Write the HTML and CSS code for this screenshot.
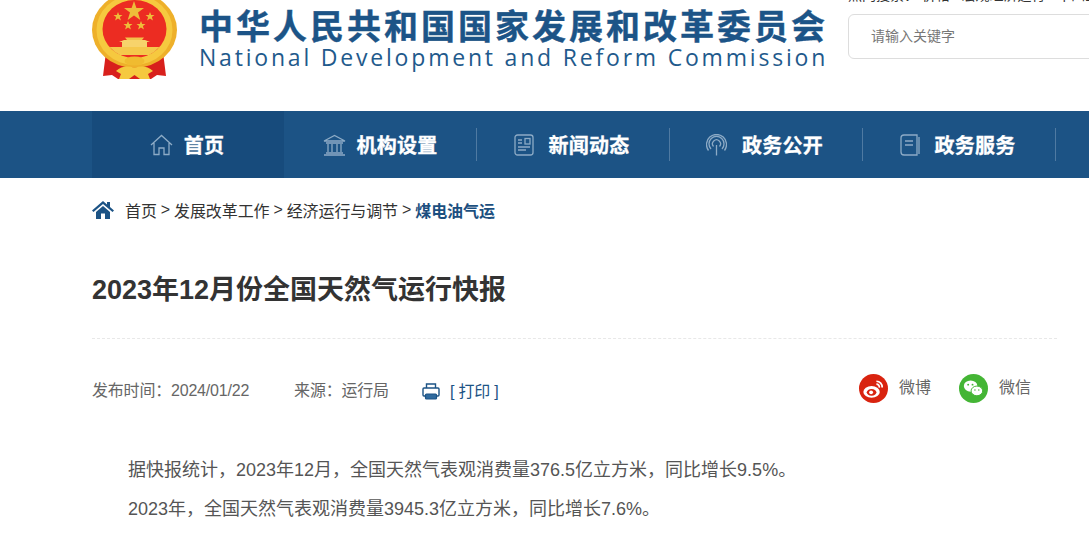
FILE: index.html
```html
<!DOCTYPE html>
<html lang="zh-CN">
<head>
<meta charset="utf-8">
<title>2023年12月份全国天然气运行快报</title>
<link rel="stylesheet" href="styles.css">
</head>
<body>
<header class="header">
  <svg class="emblem" width="85" height="80" viewBox="92 0 85 80" aria-hidden="true">
    <path d="M106 52 L103 76 L112 75 L118 79 H151 L157 75 L166 76 L163 52Z" fill="#d8201c"/>
    <ellipse cx="134.500" cy="30" rx="42.500" ry="38" fill="#eeb02a"/>
    <ellipse cx="134.500" cy="30" rx="38" ry="35" fill="#f6c93f"/>
    <ellipse cx="134.500" cy="29" rx="32" ry="29" fill="#ec2c22"/>
    <path d="M109.500 47 H159.500 Q155 52 149 55 H120 Q114 52 109.500 47Z" fill="#f5c84c"/>
    <path d="M122 47 V42 H119 L124 40 H145 L150 42 H147 V47Z" fill="#f7d36b"/>
    <path d="M127 40 L125 37.500 H144 L142 40Z" fill="#f2c24a"/>
    <g fill="#eebd3a">
      <path d="M134 1 L136.400 8 L144 8 L138 12.500 L140.300 20 L134 15.500 L127.700 20 L130 12.500 L124 8 L131.600 8Z"/>
      <path d="M118 12 L119.200 15 L122.500 15 L119.900 17 L120.900 20.500 L118 18.500 L115.100 20.500 L116.100 17 L113.500 15 L116.800 15Z"/>
      <path d="M150 12 L151.200 15 L154.500 15 L151.900 17 L152.900 20.500 L150 18.500 L147.100 20.500 L148.100 17 L145.500 15 L148.800 15Z"/>
      <path d="M128 21 L129.200 24 L132.500 24 L129.900 26 L130.900 29.500 L128 27.500 L125.100 29.500 L126.100 26 L123.500 24 L126.800 24Z"/>
      <path d="M141 21 L142.200 24 L145.500 24 L142.900 26 L143.900 29.500 L141 27.500 L138.100 29.500 L139.100 26 L136.500 24 L139.800 24Z"/>
    </g>
    <ellipse cx="134.500" cy="61" rx="10" ry="4.500" fill="#f0bb30"/>
    <path d="M116 71 Q124 64 134.500 68 Q145 64 153 71 L148 74 L150 79 H140 L134.500 75 L129 79 H119 L121 74Z" fill="#f5c93f"/>
  </svg>
  <div class="brand">
    <div class="brand-cn">中华人民共和国国家发展和改革委员会</div>
    <div class="brand-en">National Development and Reform Commission</div>
  </div>
  <div class="search-col">
    <div class="hot"><span class="hot-text">热门搜索： 价格 &nbsp; 宏观经济运行 &nbsp; 十四五规划 碳达峰</span></div>
    <div class="search-box">请输入关键字</div>
  </div>
</header>

<nav class="nav">
  <a class="nav-item active">
    <svg class="nav-icon" width="23" height="22" viewBox="0 0 23 22"><path d="M1 11 L11.500 1.500 L22 11 M4 9 V20.500 H9 V14 H14 V20.500 H19 V9"/></svg>
    <span>首页</span>
  </a>
  <a class="nav-item">
    <svg class="nav-icon" width="23" height="22" viewBox="0 0 23 22"><path d="M1 7 L11.500 1.500 L22 7 Z M3 9 H20 M5 10 V18 M9 10 V18 M14 10 V18 M18 10 V18 M3 19 H20 M1 21 H22"/></svg>
    <span>机构设置</span>
  </a>
  <a class="nav-item wide">
    <svg class="nav-icon" width="20" height="22" viewBox="0 0 20 22"><rect x="1" y="1" width="18" height="20" rx="2.500"/><path d="M4 6 H8 M4 9 H8 M4 13 H16 M4 16 H12"/><rect x="11" y="4.500" width="5" height="5.500"/></svg>
    <span>新闻动态</span>
  </a>
  <a class="nav-item wide">
    <svg class="nav-icon" width="21" height="22" viewBox="0 0 21 22"><path d="M10.500 11 V21.500"/><path d="M5 15 A7.500 7.500 0 1 1 16 15 M7.500 12.500 A4 4 0 1 1 13.500 12.500 M2.500 16.500 A10 10 0 1 1 18.500 16.500"/></svg>
    <span>政务公开</span>
  </a>
  <a class="nav-item wide">
    <svg class="nav-icon" width="20" height="22" viewBox="0 0 20 22"><path d="M17 1 H4 A3 3 0 0 0 1 4 V18 A3 3 0 0 0 4 21 H17 Z M19 3 V20"/><path d="M5 7 H13 M5 11 H13"/></svg>
    <span>政务服务</span>
  </a>
</nav>

<main class="main">
  <div class="crumbs">
    <svg class="crumb-home" width="22" height="18" viewBox="0 0 22 18"><path d="M11 0 L15 3.400 V1 H18 V6 L22 9.500 L20.500 11 L11 3 L1.500 11 L0 9.500Z M4 11 L11 5 L18 11 V18 H13 V12.500 H9 V18 H4Z"/></svg>
    <span>首页</span><span class="sep">&gt;</span><span>发展改革工作</span><span class="sep">&gt;</span><span>经济运行与调节</span><span class="sep">&gt;</span><strong>煤电油气运</strong>
  </div>
  <h1 class="title">2023年12月份全国天然气运行快报</h1>
  <div class="meta">
    <span>发布时间：2024/01/22</span>
    <span class="meta-src">来源：运行局</span>
    <a class="print">
      <svg class="print-icon" width="18" height="17" viewBox="0 0 18 17"><path class="print-line" d="M4.500 5 V1 H13.500 V5 M3.500 13 H2 A1 1 0 0 1 1 12 V6 A1 1 0 0 1 2 5 H16 A1 1 0 0 1 17 6 V12 A1 1 0 0 1 16 13 H14.500"/><rect class="print-fill" x="3.500" y="11" width="11" height="5" rx="1"/></svg>
      <span class="print-text">[ 打印 ]</span>
    </a>
    <div class="share">
      <a class="share-item">
        <svg width="29" height="29" viewBox="0 0 30 30"><circle cx="15" cy="15" r="15" fill="#d9230f"/><ellipse cx="13" cy="18.500" rx="8.500" ry="6" fill="#fff"/><ellipse cx="13" cy="19" rx="5" ry="3.600" fill="#d9230f"/><circle cx="12.500" cy="19" r="2" fill="#fff"/><path d="M18 7.500 A6 6 0 0 1 24 14 M18 10.500 A3 3 0 0 1 21 14" fill="none" stroke="#fff" stroke-width="1.800"/></svg>
        <span class="share-text">微博</span>
      </a>
      <a class="share-item">
        <svg width="29" height="29" viewBox="0 0 30 30"><circle cx="15" cy="15" r="15" fill="#44b535"/><ellipse cx="12" cy="12.500" rx="7" ry="5.800" fill="#fff"/><ellipse cx="18.500" cy="17.500" rx="6" ry="5" fill="#fff" stroke="#44b535"/><circle cx="9.500" cy="11" r="1" fill="#44b535"/><circle cx="14" cy="11" r="1" fill="#44b535"/><circle cx="16.500" cy="16.500" r=".8" fill="#44b535"/><circle cx="20.500" cy="16.500" r=".8" fill="#44b535"/></svg>
        <span class="share-text">微信</span>
      </a>
    </div>
  </div>
  <article class="content">
    <p>据快报统计，2023年12月，全国天然气表观消费量376.5亿立方米，同比增长9.5%。</p>
    <p>2023年，全国天然气表观消费量3945.3亿立方米，同比增长7.6%。</p>
  </article>
</main>
</body>
</html>
```
FILE: styles.css
```css
* { box-sizing: border-box; }
html, body { margin: 0; padding: 0; height: 539px; overflow: hidden; background: #fff; }
body { width: 1089px; font-family: "Liberation Sans", "Noto Sans CJK SC", sans-serif; color: #333; }

.header { display: flex; height: 111px; padding-left: 92px; overflow: hidden; }
.emblem { flex: none; }
.brand { flex: none; width: 636px; margin-left: 22px; padding-top: 6px; }
.brand-cn { font-family: "Noto Sans CJK SC", sans-serif; font-weight: 700; font-size: 34px; line-height: 38px; letter-spacing: 3px; color: #1c5487; white-space: nowrap; -webkit-text-stroke: .4px #1c5487; }
.brand-en { font-family: "Open Sans", sans-serif; font-size: 23px; line-height: 26px; letter-spacing: 2.800px; color: #1f5a8c; white-space: nowrap; }
.search-col { flex: none; width: 300px; margin-left: 13px; }
.hot { height: 14px; overflow: hidden; }
.hot-text { display: block; margin-top: -13px; font-size: 14px; line-height: 16px; color: #333; white-space: nowrap; }
.search-box { height: 45px; border: 1px solid #ddd; border-radius: 6px; padding-left: 22px; font-size: 14px; line-height: 43px; color: #777; }

.nav { display: grid; grid-template-columns: 192px repeat(4, 193px); align-items: center; height: 67px; padding-left: 92px; background: #1c5385; }
.nav-item { display: flex; align-items: center; justify-content: center; gap: 11px; height: 33px; border-right: 1px solid #4f7aa2; font-size: 20px; font-weight: 700; letter-spacing: .2px; color: #fff; -webkit-text-stroke: .3px #fff; }
.nav-item.wide { gap: 15px; padding-right: 3px; }
.nav-item.active { align-self: stretch; height: auto; border-right: 0; padding-right: 2px; background: #174b7c; }
.nav-icon { fill: none; stroke: #8dabc6; stroke-width: 1.300; }

.main { padding: 0 32px 0 92px; }
.crumbs { display: flex; align-items: center; height: 20px; margin-top: 22px; font-size: 16px; letter-spacing: -.1px; color: #333; white-space: nowrap; }
.crumb-home { margin-right: 11px; fill: #1c5385; }
.crumbs .sep { margin: 0 4px; }
.crumbs strong { color: #1c4f80; font-weight: 700; }
.title { margin: 50px 0 0; font-size: 27px; line-height: 40px; font-weight: 700; color: #333; }
.meta { display: flex; align-items: center; margin-top: 28px; padding-top: 35px; border-top: 1px dashed #e8e8e8; font-size: 16px; letter-spacing: -.2px; color: #666; }
.meta-src { margin-left: 45px; }
.print { display: flex; align-items: center; gap: 10px; margin-left: 33px; color: #1c5385; }
.print-icon { margin-top: 6px; }
.print-text { margin-top: 2px; }
.print-line { fill: none; stroke: #1c5385; stroke-width: 1.400; }
.print-fill { fill: #2f6a9e; stroke: #1c5385; stroke-width: 1.200; }
.share { display: flex; gap: 28px; margin-left: auto; padding-right: 26px; }
.share-item { display: flex; align-items: center; gap: 11px; letter-spacing: 0; color: #666; }
.share-text { margin-bottom: 5px; }

.content { margin-top: 48px; font-size: 18px; color: #555; }
.content p { margin: 0; line-height: 39px; text-indent: 36px; }
```
